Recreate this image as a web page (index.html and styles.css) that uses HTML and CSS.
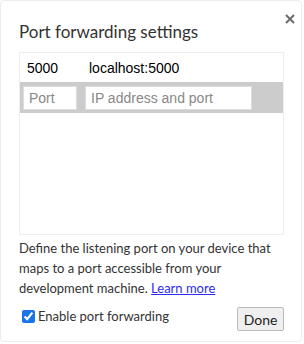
FILE: index.html
```html
<html>
<head>
  <link rel="stylesheet" href="styles.css">
</head>
<body>

<div class="dialog">
  <button class="close" aria-label="Close">
    <svg width="10" height="10" viewBox="0 0 10 10"><path d="M1 1 L9 9 M9 1 L1 9" stroke="#6b6b6b" stroke-width="2"/></svg>
  </button>
  <h2 class="title">Port forwarding settings</h2>

  <div class="rule-list">
    <div class="rule-row">
      <span class="rule-port">5000</span>
      <span class="rule-address">localhost:5000</span>
    </div>
    <div class="rule-row rule-new">
      <input type="text" class="input-port" placeholder="Port">
      <input type="text" class="input-address" placeholder="IP address and port">
    </div>
  </div>

  <p class="help">Define the listening port on your device that maps to a port accessible from your development machine. <a href="#">Learn more</a></p>

  <div class="footer">
    <label class="enable">
      <input type="checkbox" checked>
      <span>Enable port forwarding</span>
    </label>
    <button class="done">Done</button>
  </div>
</div>

</body>
</html>
```

FILE: styles.css
```css
body {
  margin: 0;
  background: #fff;
}

.dialog {
  position: relative;
  width: 302px;
  height: 342px;
  border: 1px solid #ececec;
  border-radius: 4px;
  background: #fff;
  padding: 0 17px 0 18px;
  box-sizing: border-box;
  font-family: Lato, "Noto Sans", sans-serif;
  color: #333;
}

.close {
  position: absolute;
  top: 11px;
  right: 4px;
  width: 14px;
  height: 14px;
  padding: 2px;
  border: none;
  background: none;
}

.title {
  margin: 0;
  padding: 20px 0 0 0;
  height: 31px;
  font-size: 17px;
  line-height: 22px;
  font-weight: normal;
  color: #333;
}

.rule-list {
  height: 181px;
  border: 1px solid #eee;
  font-family: "Liberation Sans", Arial, sans-serif;
  font-size: 14px;
  color: #000;
}

.rule-row {
  display: flex;
  align-items: center;
  height: 29px;
  padding: 0 7px;
}

.rule-port {
  width: 62px;
}

.rule-new {
  height: 31px;
  padding: 0 3px;
  background: #ccc;
  gap: 8px;
}

.rule-new input {
  height: 24px;
  border: 1px solid #ddd;
  background: #fff;
  padding: 0 5px;
  box-sizing: border-box;
  font-family: "Liberation Sans", Arial, sans-serif;
  font-size: 14px;
}

.rule-new input::placeholder {
  color: #888;
}

.input-port {
  width: 54px;
}

.input-address {
  width: 167px;
}

.help {
  margin: 3px 0 0 0;
  font-size: 13px;
  line-height: 20px;
  color: #333;
}

.help a {
  color: #2c2cf0;
}

.footer {
  display: flex;
  align-items: center;
  justify-content: space-between;
  margin-top: 9px;
}

.enable {
  display: flex;
  align-items: center;
  gap: 3px;
  margin-bottom: 6px;
  font-size: 13px;
  color: #333;
  padding-left: 3px;
}

.enable input {
  margin: 0;
  width: 13px;
  height: 13px;
  accent-color: #1a73e8;
}

.done {
  width: 47px;
  height: 24px;
  padding: 0;
  border: 1px solid #bbb;
  border-radius: 2px;
  background: #efefef;
  font-family: Lato, "Noto Sans", sans-serif;
  font-size: 14px;
  color: #222;
}
```
